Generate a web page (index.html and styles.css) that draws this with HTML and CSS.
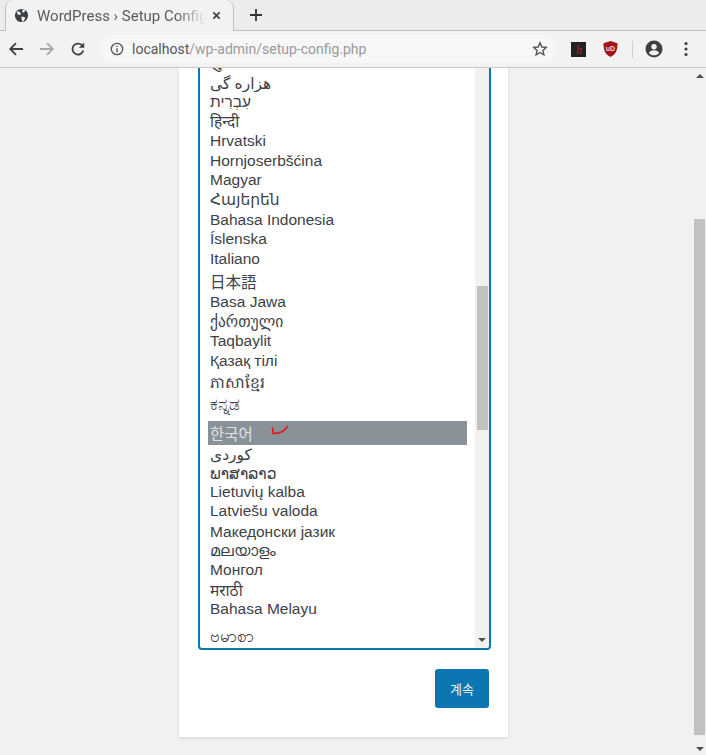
FILE: index.html
```html
<!DOCTYPE html>
<html lang="ko">
<head>
  <meta charset="UTF-8">
  <meta name="viewport" content="width=device-width, initial-scale=1.0">
  <title>WordPress › Setup Configuration File</title>
  <link rel="stylesheet" href="styles.css">
</head>
<body>
  <div class="browser">
    <div class="tabstrip">
      <div class="tab">
        <svg class="favicon" viewBox="0 0 16 16">
          <circle cx="8" cy="8" r="7" fill="#3c4043"/>
          <path d="M3 3.500l3 .5 1.500 2-1 1.500-2-.5-1-1zM9 1.500l3 1-1 2-2 .5zM8 9l3 .5 1 1.500-2 3.500-1.500-.5-.5-3z" fill="#f2f2f2"/>
        </svg>
        <span class="tab-title">WordPress › Setup Configuration File</span>
        <svg class="tab-close" viewBox="0 0 10 10">
          <path d="M1.500 1.500l7 7M8.500 1.500l-7 7" stroke="#3c4043" stroke-width="1.800" fill="none"/>
        </svg>
      </div>
      <svg class="new-tab" viewBox="0 0 12 12">
        <path d="M6 0v12M0 6h12" stroke="#333" stroke-width="1.800" fill="none"/>
      </svg>
    </div>

    <div class="toolbar">
      <svg class="tool-icon" viewBox="0 0 16 16">
        <path d="M15 8H2.500M8 2.200L2.200 8 8 13.800" stroke="#3c4043" stroke-width="1.800" fill="none"/>
      </svg>
      <svg class="tool-icon" viewBox="0 0 16 16">
        <path d="M1 8h12.500M8 2.200L13.800 8 8 13.800" stroke="#a8a8a8" stroke-width="1.800" fill="none"/>
      </svg>
      <svg class="tool-icon" viewBox="0 0 16 16">
        <path d="M13.300 9.500A5.500 5.500 0 1 1 12 4.300" stroke="#3c4043" stroke-width="1.800" fill="none"/>
        <path d="M14.200 1.500v5.300H8.900z" fill="#3c4043"/>
      </svg>
      <div class="omnibox">
        <svg class="info-icon" viewBox="0 0 14 14">
          <circle cx="7" cy="7" r="5.700" stroke="#555" stroke-width="1.300" fill="none"/>
          <path d="M7 6.200v4M7 3.700v1.300" stroke="#555" stroke-width="1.400"/>
        </svg>
        <span class="url"><span class="url-host">localhost</span>/wp-admin/setup-config.php</span>
        <svg class="star-icon" viewBox="0 0 16 16">
          <path d="M8 1.800l1.800 4.200 4.500.4-3.400 3 1 4.400L8 11.500l-3.900 2.300 1-4.400-3.400-3 4.500-.4z" stroke="#555" stroke-width="1.400" fill="none"/>
        </svg>
      </div>
      <svg class="ext-icon" viewBox="0 0 15 15">
        <rect width="15" height="15" fill="#222"/>
        <text x="5" y="12" class="ext-h">h</text>
      </svg>
      <svg class="ext-icon ext-shield" viewBox="0 0 15 16">
        <path d="M7.500 0l7 2.200c0 6-1 10.800-7 13.800-6-3-7-7.800-7-13.800z" fill="#a3141b"/>
        <text x="7.500" y="9.500" class="ext-ub">uD</text>
      </svg>
      <span class="tool-sep"></span>
      <svg class="avatar-icon" viewBox="0 0 18 18">
        <circle cx="9" cy="9" r="8.500" fill="#3c4043"/>
        <circle cx="9" cy="6.700" r="2.700" fill="#f2f2f2"/>
        <path d="M3.800 13c1-2 3.200-2.700 5.200-2.700s4.200.7 5.200 2.700c-1.300 1.500-3.200 2.300-5.200 2.300s-3.900-.8-5.200-2.300z" fill="#f2f2f2"/>
      </svg>
      <svg class="menu-icon" viewBox="0 0 4 16">
        <circle cx="2" cy="2.500" r="1.600" fill="#3c4043"/>
        <circle cx="2" cy="8" r="1.600" fill="#3c4043"/>
        <circle cx="2" cy="13.500" r="1.600" fill="#3c4043"/>
      </svg>
    </div>

    <div class="viewport">
      <div class="page">
        <div class="card">
          <div class="listbox">
            <ul class="options">
              <li class="opt gujarati">ગુજરાતી</li>
              <li class="opt h19">هزاره گی</li>
              <li class="opt h18">עִבְרִית</li>
              <li class="opt">हिन्दी</li>
              <li class="opt">Hrvatski</li>
              <li class="opt h19">Hornjoserbšćina</li>
              <li class="opt">Magyar</li>
              <li class="opt">Հայերեն</li>
              <li class="opt h19">Bahasa Indonesia</li>
              <li class="opt">Íslenska</li>
              <li class="opt h19">Italiano</li>
              <li class="opt h24 cjk-jp nudge-down">日本語</li>
              <li class="opt">Basa Jawa</li>
              <li class="opt">ქართული</li>
              <li class="opt h19 nudge-up">Taqbaylit</li>
              <li class="opt">Қазақ тілі</li>
              <li class="opt h23 khmer">ភាសាខ្មែរ</li>
              <li class="opt h27 kannada">ಕನ್ನಡ</li>
              <li class="opt h24 cjk-kr selected">한국어
                <svg class="tick" viewBox="0 0 18 11">
                  <path d="M1.500 3.500L2 9.500c3.500 0 6-.5 8.500-1.500 2.500-1 4.500-3.500 6.500-6" stroke="#e0141c" stroke-width="1.600" fill="none"/>
                </svg>
              </li>
              <li class="opt h19">کوردی</li>
              <li class="opt h18 nudge-down">ພາສາລາວ</li>
              <li class="opt h19">Lietuvių kalba</li>
              <li class="opt h19">Latviešu valoda</li>
              <li class="opt h21">Македонски јазик</li>
              <li class="opt h19">മലയാളം</li>
              <li class="opt h19">Монгол</li>
              <li class="opt nudge-down">मराठी</li>
              <li class="opt h19">Bahasa Melayu</li>
              <li class="opt h30 myanmar">ဗမာစာ</li>
            </ul>
            <div class="list-scroll">
              <span class="list-track"><span class="list-thumb"></span></span>
              <span class="arrow-down"></span>
            </div>
          </div>
          <div class="actions">
            <button class="continue">계속</button>
          </div>
        </div>
      </div>
      <div class="page-scroll">
        <span class="arrow-up"></span>
        <span class="page-thumb"></span>
        <span class="arrow-down"></span>
      </div>
    </div>
  </div>
</body>
</html>
```

FILE: styles.css
```css
html, body {
  margin: 0;
  height: 100%;
  overflow: hidden;
}
body {
  font-family: "Liberation Sans", "DejaVu Sans", "Noto Sans", sans-serif;
  background-color: #f1f1f1;
}
.browser {
  display: flex;
  flex-direction: column;
  height: 755px;
}

/* tab strip */
.tabstrip {
  display: flex;
  align-items: flex-end;
  height: 31px;
  flex-shrink: 0;
  padding-left: 5px;
  background-color: #ececec;
  border-bottom: 1px solid #c0c0c0;
  box-sizing: border-box;
}
.tab {
  display: flex;
  align-items: center;
  width: 229px;
  height: 31px;
  margin-bottom: -1px;
  box-sizing: border-box;
  padding: 0 12px 0 8px;
  background-color: #f2f2f2;
  border: 1px solid #c0c0c0;
  border-top: none;
  border-bottom: none;
  border-top-right-radius: 8px;
  border-top-left-radius: 8px;
}
.favicon {
  width: 15px;
  height: 15px;
  flex-shrink: 0;
}
.tab-title {
  flex: 1;
  overflow: hidden;
  white-space: nowrap;
  margin-left: 8px;
  font-family: Roboto, sans-serif;
  font-size: 15px;
  color: #5a5a5a;
  -webkit-mask-image: linear-gradient(to right, #000 82%, transparent 100%);
  mask-image: linear-gradient(to right, #000 82%, transparent 100%);
}
.tab-close {
  width: 9px;
  height: 9px;
  margin-left: 6px;
  flex-shrink: 0;
}
.new-tab {
  width: 12px;
  height: 12px;
  margin: 0 0 9px 16px;
}

/* toolbar */
.toolbar {
  display: flex;
  align-items: center;
  height: 37px;
  flex-shrink: 0;
  box-sizing: border-box;
  padding-left: 8px;
  background-color: #f2f2f2;
  border-bottom: 1px solid #c8c8c8;
}
.tool-icon {
  width: 16px;
  height: 16px;
  margin-right: 15px;
}
.omnibox {
  display: flex;
  align-items: center;
  width: 456px;
  height: 28px;
  margin-left: -1px;
  box-sizing: border-box;
  padding: 0 8px 0 10px;
  border-radius: 14px;
  background-color: #f7f7f7;
}
.info-icon {
  width: 14px;
  height: 14px;
}
.url {
  flex: 1;
  margin-left: 8px;
  font-family: Roboto, sans-serif;
  font-size: 14px;
  color: #9a9a9a;
}
.url-host {
  color: #555;
}
.star-icon {
  width: 16px;
  height: 16px;
}
.ext-icon {
  width: 15px;
  height: 15px;
  margin-left: 15px;
}
.ext-shield {
  height: 16px;
  margin-left: 17px;
}
.ext-h {
  font-family: "Liberation Serif", serif;
  font-style: italic;
  font-size: 12px;
  fill: #b3262a;
}
.ext-ub {
  font-family: "Liberation Sans", sans-serif;
  font-weight: bold;
  font-size: 7px;
  text-anchor: middle;
  fill: #f0d9c8;
}
.tool-sep {
  width: 1px;
  height: 17px;
  margin: 0 12px 0 14px;
  background-color: #cfcfcf;
}
.avatar-icon {
  width: 18px;
  height: 18px;
}
.menu-icon {
  width: 4px;
  height: 16px;
  margin-left: 21px;
}

/* page */
.viewport {
  flex: 1;
  display: flex;
  min-height: 0;
}
.page {
  flex: 1;
  display: flex;
  flex-direction: column;
  justify-content: flex-end;
  min-width: 0;
  padding: 0 0 18px 179px;
  overflow: hidden;
}
.card {
  width: 329px;
  box-sizing: border-box;
  padding: 0 17px 29px 19px;
  background-color: #fff;
  box-shadow: 0 1px 3px rgba(0,0,0,0.13);
}
.listbox {
  display: flex;
  height: 582px;
  box-sizing: border-box;
  border: 2px solid #0a78ab;
  border-top: none;
  border-bottom-left-radius: 4px;
  border-bottom-right-radius: 4px;
  overflow: hidden;
}
.options {
  flex: 1;
  display: flex;
  flex-direction: column;
  justify-content: flex-end;
  margin: 0;
  padding: 0 8px;
  list-style: none;
  font-size: 15.5px;
  color: #3d4247;
  overflow: hidden;
}
.opt {
  flex-shrink: 0;
  display: flex;
  align-items: center;
  height: 20px;
  padding-left: 2px;
  white-space: nowrap;
  box-sizing: border-box;
}
.h18 { height: 18px; }
.h19 { height: 19px; }
.h21 { height: 21px; padding-top: 2px; }
.h23 { height: 23px; }
.h24 { height: 24px; }
.h27 { height: 27px; }
.h30 { height: 30px; }
.nudge-down { padding-top: 2px; }
.nudge-up { padding-bottom: 2px; }
.gujarati {
  padding-bottom: 2px;
}
.khmer {
  padding-top: 4px;
}
.kannada {
  font-size: 17px;
  padding-bottom: 5px;
}
.myanmar {
  font-size: 17px;
  padding-top: 8px;
}
.cjk-jp {
  font-family: "Liberation Sans", "Noto Sans CJK JP", sans-serif;
}
.cjk-kr {
  font-family: "Liberation Sans", "Noto Sans CJK KR", sans-serif;
}
.selected {
  background-color: #8a9299;
  color: #dfe2e4;
}
.tick {
  width: 18px;
  height: 11px;
  margin: -8px 0 0 18px;
}
.list-scroll {
  display: flex;
  flex-direction: column;
  align-items: center;
  width: 14px;
  flex-shrink: 0;
  background-color: #f1f1f1;
  padding-bottom: 6px;
  box-sizing: border-box;
}
.list-track {
  flex: 1;
  display: flex;
  flex-direction: column;
  justify-content: flex-end;
  padding-bottom: 208px;
}
.list-thumb {
  display: block;
  width: 11px;
  height: 144px;
  background-color: #c1c1c1;
}
.arrow-down {
  width: 0;
  height: 0;
  border-left: 4px solid transparent;
  border-right: 4px solid transparent;
  border-top: 4px solid #505050;
}
.arrow-up {
  width: 0;
  height: 0;
  border-left: 4px solid transparent;
  border-right: 4px solid transparent;
  border-bottom: 4px solid #505050;
}
.actions {
  display: flex;
  justify-content: flex-end;
  margin-top: 19px;
  padding-right: 2px;
}
.continue {
  width: 54px;
  height: 39px;
  padding: 0;
  border: none;
  border-radius: 3px;
  background-color: #0b76b1;
  color: #e8f2f7;
  font-family: "Noto Sans CJK KR", sans-serif;
  font-size: 13px;
}

/* page scrollbar */
.page-scroll {
  display: flex;
  flex-direction: column;
  align-items: center;
  width: 12px;
  flex-shrink: 0;
  box-sizing: border-box;
  padding: 6px 0 3px;
  background-color: #f1f1f1;
}
.page-thumb {
  display: block;
  width: 11px;
  height: 516px;
  margin: 141px 1px 12px 0;
  background-color: #c1c1c1;
}
```
